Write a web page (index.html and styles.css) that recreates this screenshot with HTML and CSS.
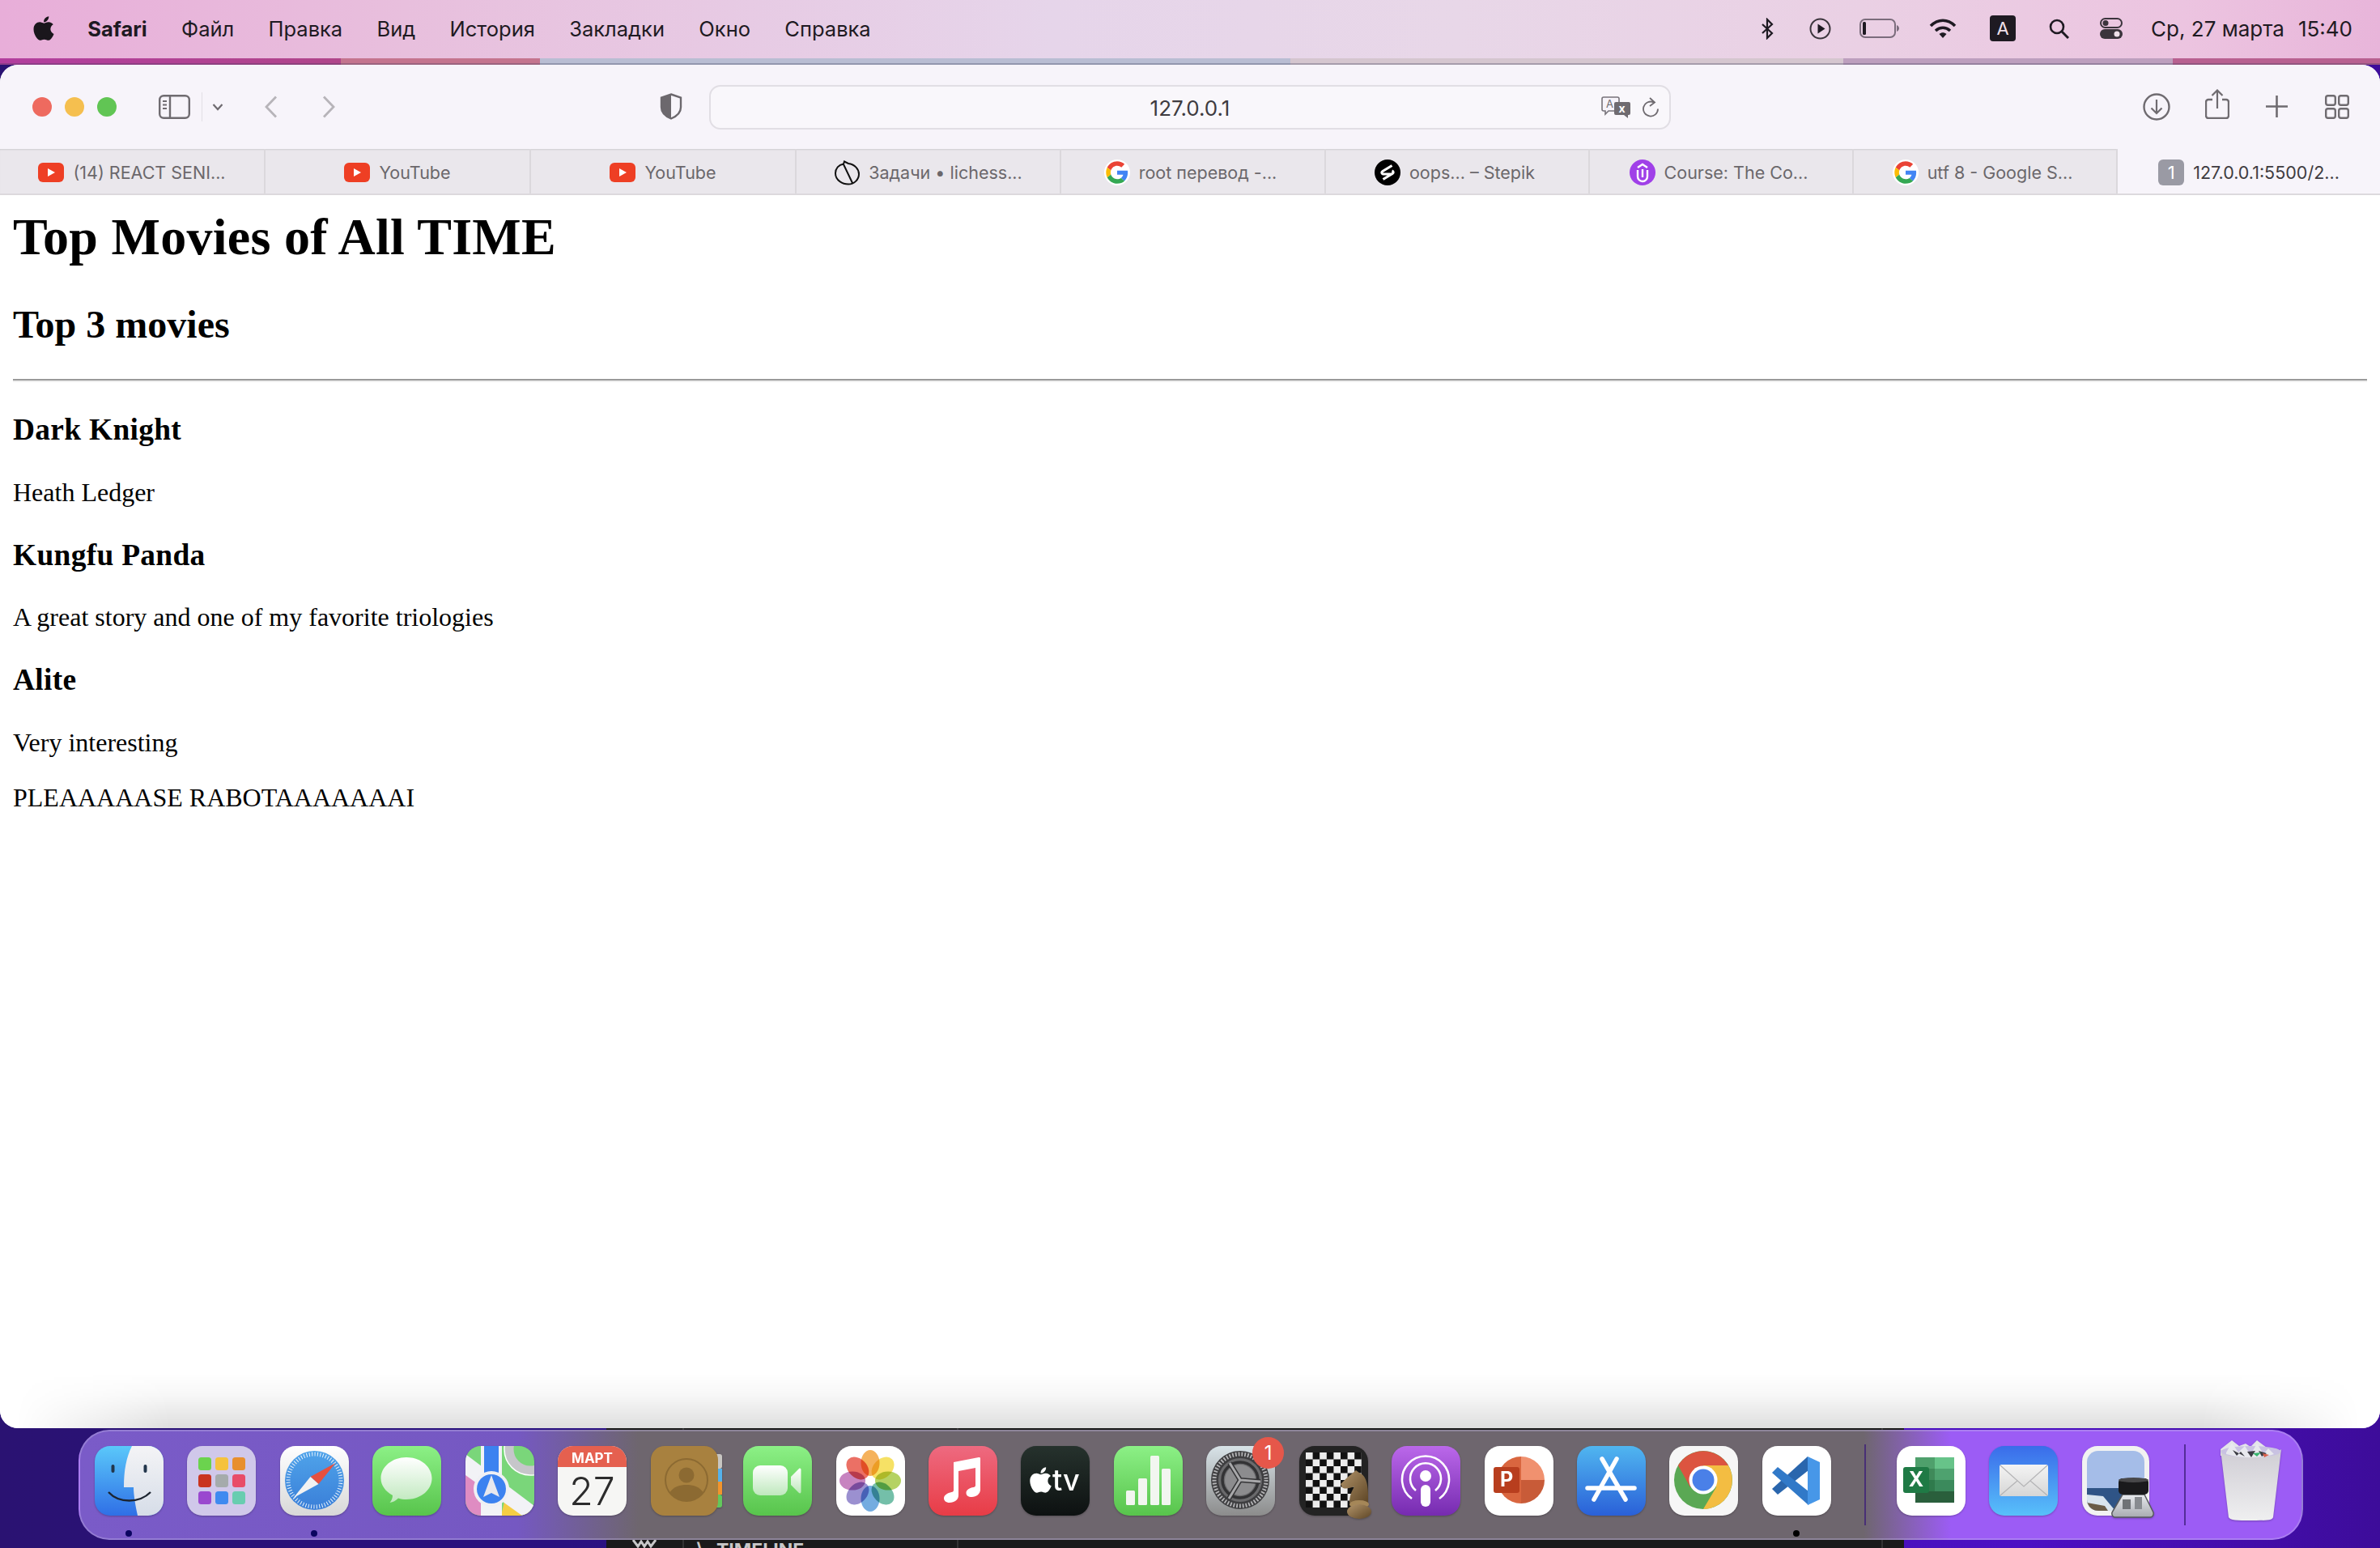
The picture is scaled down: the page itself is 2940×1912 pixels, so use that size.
FILE: index.html
```html
<!DOCTYPE html>
<html lang="en">
  <head>
    <meta charset="UTF-8" />
    <title>Top Movies of All TIME</title>
    <link rel="stylesheet" href="styles.css">
  </head>
  <body>
    <svg class="svg-defs" width="0" height="0">
      <defs>
        <linearGradient id="g-finder" x1="0" y1="0" x2="0" y2="1"><stop offset="0" stop-color="#5ac8fa"/><stop offset="1" stop-color="#2f6fe6"/></linearGradient>
        <linearGradient id="g-finder2" x1="0" y1="0" x2="0" y2="1"><stop offset="0" stop-color="#f4f4f6"/><stop offset="1" stop-color="#d6dde8"/></linearGradient>
        <linearGradient id="g-safari" x1="0" y1="0" x2="0" y2="1"><stop offset="0" stop-color="#ffffff"/><stop offset="1" stop-color="#d8d8d8"/></linearGradient>
        <linearGradient id="g-compass" x1="0" y1="0" x2="0" y2="1"><stop offset="0" stop-color="#4fa3ea"/><stop offset="1" stop-color="#3a7fd8"/></linearGradient>
        <linearGradient id="g-green" x1="0" y1="0" x2="0" y2="1"><stop offset="0" stop-color="#8cf086"/><stop offset="1" stop-color="#58c44c"/></linearGradient>
        <linearGradient id="g-bubble" x1="0" y1="0" x2="0" y2="1"><stop offset="0" stop-color="#ffffff"/><stop offset="1" stop-color="#bfe8bd"/></linearGradient>
        <linearGradient id="g-music" x1="0" y1="0" x2="0" y2="1"><stop offset="0" stop-color="#ee6a80"/><stop offset="1" stop-color="#e83c46"/></linearGradient>
        <linearGradient id="g-tv" x1="0" y1="0" x2="0" y2="1"><stop offset="0" stop-color="#26322d"/><stop offset="1" stop-color="#0d1111"/></linearGradient>
        <linearGradient id="g-settings" x1="0" y1="0" x2="0" y2="1"><stop offset="0" stop-color="#d8e3e8"/><stop offset="1" stop-color="#8c8c8c"/></linearGradient>
        <linearGradient id="g-podcast" x1="0" y1="0" x2="0" y2="1"><stop offset="0" stop-color="#bb68ea"/><stop offset="1" stop-color="#762bb0"/></linearGradient>
        <linearGradient id="g-appstore" x1="0" y1="0" x2="0" y2="1"><stop offset="0" stop-color="#50b6f0"/><stop offset="1" stop-color="#2a60d8"/></linearGradient>
        <linearGradient id="g-mail" x1="0" y1="0" x2="0" y2="1"><stop offset="0" stop-color="#3a6cea"/><stop offset="1" stop-color="#58c0fa"/></linearGradient>
        <linearGradient id="g-envelope" x1="0" y1="0" x2="0" y2="1"><stop offset="0" stop-color="#f4f4f4"/><stop offset="1" stop-color="#d6d6d6"/></linearGradient>
        <linearGradient id="g-knight" x1="0" y1="0" x2="1" y2="1"><stop offset="0" stop-color="#b2946a"/><stop offset="1" stop-color="#5e4626"/></linearGradient>
        <linearGradient id="g-trash" x1="0" y1="0" x2="0" y2="1"><stop offset="0" stop-color="#cfcdd4"/><stop offset="1" stop-color="#efeff0"/></linearGradient>
        <linearGradient id="g-glass" x1="0" y1="0" x2="0" y2="1"><stop offset="0" stop-color="#e8eaee"/><stop offset="1" stop-color="#a8abb0"/></linearGradient>
        <pattern id="p-board" width="17.2" height="17" patternUnits="userSpaceOnUse" x="8" y="8">
          <rect width="17.2" height="17" fill="#111"/>
          <rect width="8.6" height="8.5" fill="#ececec"/>
          <rect x="8.6" y="8.5" width="8.6" height="8.5" fill="#ececec"/>
        </pattern>
        <symbol id="s-apple" viewBox="0 0 384 512">
          <path d="M318.7 268.7c-.2-36.7 16.4-64.4 50-84.8-18.8-26.9-47.2-41.7-84.7-44.6-35.5-2.8-74.3 20.7-88.5 20.7-15 0-49.4-19.7-76.4-19.7C63.3 141.2 4 184.8 4 273.5q0 39.3 14.4 81.2c12.8 36.7 59 126.7 107.2 125.2 25.2-.6 43-17.9 75.8-17.9 31.8 0 48.3 17.9 76.4 17.9 48.6-.7 90.4-82.5 102.6-119.3-65.2-30.7-61.7-90-61.7-91.9zm-56.6-164.2c27.3-32.4 24.8-61.9 24-72.5-24.1 1.4-52 16.4-67.9 34.9-17.5 19.8-27.8 44.3-25.6 71.9 26.1 2 49.9-11.4 69.5-34.3z"/>
        </symbol>
        <symbol id="s-youtube" viewBox="0 0 32 24">
          <rect width="32" height="24" rx="6" fill="#ee3f24"/>
          <path d="M12 7l9 5-9 5z" fill="#fff"/>
        </symbol>
        <symbol id="s-google" viewBox="-4 -4 56 56">
          <circle cx="24" cy="24" r="28" fill="#fff"/>
          <path fill="#EA4335" d="M24 9.5c3.54 0 6.71 1.22 9.21 3.6l6.85-6.85C35.9 2.38 30.47 0 24 0 14.62 0 6.51 5.38 2.56 13.22l7.98 6.19C12.43 13.72 17.74 9.5 24 9.5z"/>
          <path fill="#4285F4" d="M46.98 24.55c0-1.57-.15-3.09-.38-4.55H24v9.02h12.94c-.58 2.96-2.26 5.48-4.78 7.18l7.73 6c4.51-4.18 7.09-10.36 7.09-17.65z"/>
          <path fill="#FBBC05" d="M10.53 28.59c-.48-1.45-.76-2.99-.76-4.59s.27-3.14.76-4.59l-7.98-6.19C.92 16.46 0 20.12 0 24c0 3.88.92 7.54 2.56 10.78l7.97-6.19z"/>
          <path fill="#34A853" d="M24 48c6.48 0 11.93-2.13 16.02-5.81l-7.73-6c-2.15 1.45-4.92 2.3-8.29 2.3-6.26 0-11.57-4.22-13.47-9.91l-7.98 6.19C6.51 42.62 14.62 48 24 48z"/>
        </symbol>
      </defs>
    </svg>

    <div class="behind-window">
      <svg class="behind-mark" viewBox="0 0 30 10"><path d="M1 0l6 8 4-6 4 6 4-6 4 6 6-8" fill="none" stroke="#c8c8c8" stroke-width="3"/></svg>
      <span class="behind-line behind-line-a"></span>
      <span class="behind-chevron">&#8726;</span>
      <span class="behind-label">TIMELINE</span>
      <span class="behind-line behind-line-b"></span>
      <span class="behind-line behind-line-c"></span>
    </div>

    <!-- Menu bar -->
    <header class="menubar">
      <nav class="menu-left">
        <svg class="apple-logo"><use href="#s-apple"/></svg>
        <span class="menu-app">Safari</span>
        <span>Файл</span>
        <span>Правка</span>
        <span>Вид</span>
        <span>История</span>
        <span>Закладки</span>
        <span>Окно</span>
        <span>Справка</span>
      </nav>
      <div class="menu-right">
        <svg class="st-bt" viewBox="0 0 16 27"><path d="M2 8l12 11-6 6V2l6 6L2 19" fill="none" stroke="#1e1a22" stroke-width="2.2"/></svg>
        <svg class="st-play" viewBox="0 0 27 27"><circle cx="13.5" cy="13.5" r="12" fill="none" stroke="#3b343c" stroke-width="2"/><path d="M10.5 7.5l9 6-9 6z" fill="#1e1a22"/></svg>
        <svg class="st-battery" viewBox="0 0 49 24"><rect x="1" y="1" width="43" height="22" rx="6" fill="none" stroke="#7b6c7c" stroke-width="2"/><rect x="4" y="4" width="4" height="16" rx="1.5" fill="#1e1a22"/><path d="M46 8c2 1 3 2.500 3 4s-1 3-3 4z" fill="#7b6c7c"/></svg>
        <svg class="st-wifi" viewBox="0 0 34 24"><g fill="none" stroke="#1e1a22" stroke-width="3.6"><path d="M2 9c9-9 21-9 30 0"/><path d="M8 15c5.500-5 12.500-5 18 0"/></g><path d="M12.500 19c3-2.500 6-2.500 9 0L17 24z" fill="#1e1a22"/></svg>
        <div class="st-input">A</div>
        <svg class="st-search" viewBox="0 0 25 25"><circle cx="10" cy="10" r="8" fill="none" stroke="#1e1a22" stroke-width="2.6"/><path d="M16 16l8 8" stroke="#1e1a22" stroke-width="3"/></svg>
        <svg class="st-control" viewBox="0 0 28 26"><rect x="1" y="1" width="26" height="11" rx="5.500" fill="none" stroke="#3b343c" stroke-width="2"/><circle cx="7" cy="6.500" r="3.500" fill="#3b343c"/><rect y="14" width="28" height="12" rx="6" fill="#3b343c"/><circle cx="21" cy="20" r="3.500" fill="#efe0ea"/></svg>
        <span class="menu-date">Ср, 27 марта</span>
        <span class="menu-time">15:40</span>
      </div>
    </header>

    <div class="wallpaper-strip"></div>

    <!-- Safari window -->
    <main class="window">
      <div class="toolbar">
        <div class="toolbar-left">
          <div class="lights">
            <span class="light light-red"></span>
            <span class="light light-yellow"></span>
            <span class="light light-green"></span>
          </div>
          <svg class="tb-sidebar" viewBox="0 0 39 30"><rect x="1.200" y="1.200" width="36.600" height="27.600" rx="5" fill="none" stroke="#6f6b70" stroke-width="2.400"/><path d="M14 1v28" stroke="#6f6b70" stroke-width="2.400"/><path d="M5 8h5M5 12.500h5M5 17h5" stroke="#6f6b70" stroke-width="2"/></svg>
          <span class="tb-divider"></span>
          <svg class="tb-chevron" viewBox="0 0 14 10"><path d="M1.500 2l5.500 6 5.500-6" fill="none" stroke="#6f6b70" stroke-width="2.200"/></svg>
          <svg class="tb-back" viewBox="0 0 17 28"><path d="M15 1.500L3 14l12 12.500" fill="none" stroke="#b7b4b9" stroke-width="2.800"/></svg>
          <svg class="tb-forward" viewBox="0 0 17 28"><path d="M2 1.500L14 14 2 26.500" fill="none" stroke="#b7b4b9" stroke-width="2.800"/></svg>
        </div>
        <svg class="tb-shield" viewBox="0 0 28 33"><path d="M14 1.500l12 4v12c0 7-6 11.500-12 14-6-2.500-12-7-12-14v-12z" fill="none" stroke="#6c686d" stroke-width="2.400"/><path d="M14 1.500l-12 4v12c0 7 6 11.500 12 14z" fill="#6c686d"/></svg>
        <div class="urlbar">
          <span class="url-text">127.0.0.1</span>
          <svg class="url-translate" viewBox="0 0 36 27"><path d="M3 1h17a2 2 0 0 1 2 2v13a2 2 0 0 1-2 2H9l-4 4v-4H3a2 2 0 0 1-2-2V3a2 2 0 0 1 2-2z" fill="#f7f4fa" stroke="#77737a" stroke-width="1.600"/><text x="6" y="14" class="translate-a">A</text><path d="M18 7h16a2 2 0 0 1 2 2v12a2 2 0 0 1-2 2h-1v4l-5-4H18a2 2 0 0 1-2-2V9a2 2 0 0 1 2-2z" fill="#6f6b70"/><text x="21.500" y="20" class="translate-x">x</text></svg>
          <svg class="url-reload" viewBox="0 0 21 25"><path d="M14 6.500a9 9 0 1 0 5 8" fill="none" stroke="#6f6b70" stroke-width="1.800"/><path d="M9 1l6 5.500L9 11" fill="none" stroke="#6f6b70" stroke-width="1.800"/></svg>
        </div>
        <div class="toolbar-right">
          <svg class="tb-download" viewBox="0 0 34 34"><circle cx="17" cy="17" r="15.500" fill="none" stroke="#6f6b70" stroke-width="2.400"/><path d="M17 8v17M10.500 18.500l6.500 6.500 6.500-6.500" fill="none" stroke="#6f6b70" stroke-width="2.200"/></svg>
          <svg class="tb-share" viewBox="0 0 30 37"><path d="M9 13H4a3 3 0 0 0-3 3v17a3 3 0 0 0 3 3h22a3 3 0 0 0 3-3V16a3 3 0 0 0-3-3h-5" fill="none" stroke="#6f6b70" stroke-width="2.400"/><path d="M15 24V2M8.500 8L15 1.500 21.500 8" fill="none" stroke="#6f6b70" stroke-width="2.200"/></svg>
          <svg class="tb-plus" viewBox="0 0 27 27"><path d="M13.500 0v27M0 13.500h27" stroke="#6f6b70" stroke-width="2.600"/></svg>
          <svg class="tb-tabs" viewBox="0 0 30 30"><g fill="none" stroke="#6f6b70" stroke-width="2.400"><rect x="1.200" y="1.200" width="11.600" height="11.600" rx="2.500"/><rect x="17.200" y="1.200" width="11.600" height="11.600" rx="2.500"/><rect x="1.200" y="17.200" width="11.600" height="11.600" rx="2.500"/><rect x="17.200" y="17.200" width="11.600" height="11.600" rx="2.500"/></g></svg>
        </div>
      </div>

      <div class="tabs">
        <div class="tab"><svg class="tab-icon tab-yt"><use href="#s-youtube"/></svg><span>(14) REACT SENI...</span></div>
        <div class="tab"><svg class="tab-icon tab-yt"><use href="#s-youtube"/></svg><span>YouTube</span></div>
        <div class="tab"><svg class="tab-icon tab-yt"><use href="#s-youtube"/></svg><span>YouTube</span></div>
        <div class="tab"><svg class="tab-icon" viewBox="0 0 32 32"><path d="M13 2.500l5 2.500C26 6 31 12 31 18c0 7-6 12.500-13 12.500S2 26 2 17C2 11 6 6.500 12 5.500zM12 6l11 23" fill="none" stroke="#111" stroke-width="2"/></svg><span>Задачи • lichess...</span></div>
        <div class="tab tab-shifted"><svg class="tab-icon"><use href="#s-google"/></svg><span>root перевод -...</span></div>
        <div class="tab tab-shifted"><svg class="tab-icon" viewBox="0 0 32 32"><circle cx="16" cy="16" r="16" fill="#000"/><path d="M21.500 7.500L10 14.500c-2 1.500-1 3 .5 3.500l10 0M10.500 24.500L22 17.500c2-1.500 1-3-.5-3.500" fill="none" stroke="#fff" stroke-width="3.200"/></svg><span>oops... – Stepik</span></div>
        <div class="tab tab-shifted"><svg class="tab-icon" viewBox="0 0 32 32"><circle cx="16" cy="16" r="16" fill="#a040e8"/><path d="M10 13v8a6 6 0 0 0 12 0v-8M10 10l6-4 6 4" fill="none" stroke="#fff" stroke-width="2.400"/><path d="M16 12v10" stroke="#fff" stroke-width="2.400"/></svg><span>Course: The Co...</span></div>
        <div class="tab tab-shifted"><svg class="tab-icon"><use href="#s-google"/></svg><span>utf 8 - Google S...</span></div>
        <div class="tab tab-active"><span class="tab-badge">1</span><span>127.0.0.1:5500/2...</span></div>
      </div>

      <div class="content">
        <h1>Top Movies of All TIME</h1>
        <h2>Top 3 movies</h2>
        <hr />
        <h3>Dark Knight</h3>
        <p>Heath Ledger</p>
        <h3>Kungfu Panda</h3>
        <p>A great story and one of my favorite triologies</p>
        <h3>Alite</h3>
        <p>Very interesting</p>
        <p>PLEAAAAASE RABOTAAAAAAAI</p>
      </div>
      <div class="content-fade"></div>
    </main>

    <!-- Dock -->
    <footer class="dock">
      <div class="dock-item running">
        <svg class="dock-icon" viewBox="0 0 85 86"><rect width="85" height="86" rx="19" fill="url(#g-finder)"/><path d="M46 0h20a19 19 0 0 1 19 19v48a19 19 0 0 1-19 19H53C50 72 48 60 48 51H36C36 30 39 14 46 0z" fill="url(#g-finder2)"/><rect x="20.500" y="23" width="4" height="10" rx="2" fill="#22364c"/><rect x="60.500" y="23" width="4" height="10" rx="2" fill="#22364c"/><path d="M17 57c13 14 38 14 52 0" fill="none" stroke="#1c2430" stroke-width="2.400"/></svg>
      </div>
      <div class="dock-item">
        <svg class="dock-icon" viewBox="0 0 85 86"><rect width="85" height="86" rx="19" fill="#d0c8ea"/><rect x="14" y="14" width="16" height="16" rx="3.500" fill="#6bd34e"/><rect x="35" y="14" width="16" height="16" rx="3.500" fill="#f5c23e"/><rect x="56" y="14" width="16" height="16" rx="3.500" fill="#e88f2e"/><rect x="14" y="35" width="16" height="16" rx="3.500" fill="#c9331f"/><rect x="35" y="35" width="16" height="16" rx="3.500" fill="#a5abac"/><rect x="56" y="35" width="16" height="16" rx="3.500" fill="#e84c68"/><rect x="14" y="56" width="16" height="16" rx="3.500" fill="#9a48cf"/><rect x="35" y="56" width="16" height="16" rx="3.500" fill="#3f8af0"/><rect x="56" y="56" width="16" height="16" rx="3.500" fill="#68cdb0"/></svg>
      </div>
      <div class="dock-item running">
        <svg class="dock-icon" viewBox="0 0 85 86"><rect width="85" height="86" rx="19" fill="url(#g-safari)"/><circle cx="42.500" cy="42.500" r="36.500" fill="url(#g-compass)"/><circle cx="42.500" cy="42.500" r="32.500" fill="none" stroke="#e8f2fb" stroke-width="5" stroke-dasharray="1 2.400"/><path d="M68.500 21L37.500 38l10 9z" fill="#e6503f"/><path d="M16.500 64l21-26 10 9z" fill="#f2f2f2"/></svg>
      </div>
      <div class="dock-item">
        <svg class="dock-icon" viewBox="0 0 85 86"><rect width="85" height="86" rx="19" fill="url(#g-green)"/><path d="M42 14c17.500 0 31.500 11.500 31.500 26S59.500 66 42 66c-3.500 0-7-.5-10-1.500-3 3-6.500 5-10.500 5.500 2-2.500 3.500-5.500 3.500-9C16 56 10.500 48.500 10.500 40 10.500 25.500 24.500 14 42 14z" fill="url(#g-bubble)"/></svg>
      </div>
      <div class="dock-item">
        <svg class="dock-icon" viewBox="0 0 85 86"><defs><clipPath id="c-maps"><rect width="85" height="86" rx="19"/></clipPath></defs><g clip-path="url(#c-maps)"><rect width="85" height="86" fill="#7ad67a"/><path d="M0 35l30 20-5 31H0z" fill="#df8cc2"/><path d="M50 60l35 26H44z" fill="#f5cd45"/><path d="M0 10l85 64v12H70L0 36z" fill="#f2f2f6"/><rect x="19" y="0" width="26" height="86" fill="#f2f2f6"/><rect x="23" y="0" width="18" height="36" fill="#3c82f0"/><circle cx="80" cy="4" r="26" fill="none" stroke="#c6c6ca" stroke-width="11"/><circle cx="80" cy="4" r="32" fill="none" stroke="#fff" stroke-width="1.500"/></g><circle cx="32" cy="53" r="22" fill="#f0f0f4"/><circle cx="32" cy="53" r="18" fill="#3c82f0"/><path d="M32 36l10 27-10-5-10 5z" fill="#e8e8ee"/></svg>
      </div>
      <div class="dock-item">
        <svg class="dock-icon" viewBox="0 0 85 86"><defs><clipPath id="c-cal"><rect width="85" height="86" rx="19"/></clipPath></defs><g clip-path="url(#c-cal)"><rect width="85" height="86" fill="#f6f6f4"/><rect width="85" height="26" fill="#e5604f"/></g><text x="42.500" y="21" class="cal-month">МАРТ</text><text x="42.500" y="73" class="cal-day">27</text></svg>
      </div>
      <div class="dock-item">
        <svg class="dock-icon" viewBox="0 0 85 86"><rect x="78" y="10" width="10" height="18" rx="3" fill="#c8c6c2"/><rect x="78" y="28" width="10" height="16" fill="#54b2ec"/><rect x="78" y="44" width="10" height="16" fill="#f2942c"/><rect x="78" y="60" width="10" height="16" rx="3" fill="#62c85c"/><rect width="83" height="86" rx="17" fill="#a8813f"/><g fill="none" stroke="#8c6a32" stroke-width="2"><circle cx="44" cy="42" r="26"/></g><circle cx="44" cy="36" r="9.500" fill="#8c6a32"/><path d="M23 58c5-8 13-10 21-10s16 2 21 10c-5 6-13 10-21 10s-16-4-21-10z" fill="#8c6a32"/></svg>
      </div>
      <div class="dock-item">
        <svg class="dock-icon" viewBox="0 0 85 86"><rect width="85" height="86" rx="19" fill="url(#g-green)"/><rect x="12" y="24" width="43" height="37" rx="9" fill="url(#g-bubble)"/><path d="M59 38l10-10c1.500-1 2.500 0 2.500 1.500v27c0 1.500-1 2.500-2.500 1.500L59 48z" fill="url(#g-bubble)"/></svg>
      </div>
      <div class="dock-item">
        <svg class="dock-icon" viewBox="0 0 85 86"><rect width="85" height="86" rx="19" fill="#fff"/><g class="petals" transform="translate(42 43)"><ellipse cy="-22" rx="11.500" ry="16" fill="#f3a53f"/><ellipse cy="-22" rx="11.500" ry="16" fill="#f5dc4a" transform="rotate(45)"/><ellipse cy="-22" rx="11.500" ry="16" fill="#a8ca48" transform="rotate(90)"/><ellipse cy="-22" rx="11.500" ry="16" fill="#5cb49a" transform="rotate(135)"/><ellipse cy="-22" rx="11.500" ry="16" fill="#5c9ddb" transform="rotate(180)"/><ellipse cy="-22" rx="11.500" ry="16" fill="#8a7cc8" transform="rotate(225)"/><ellipse cy="-22" rx="11.500" ry="16" fill="#bd6fb5" transform="rotate(270)"/><ellipse cy="-22" rx="11.500" ry="16" fill="#e8574a" transform="rotate(315)"/></g></svg>
      </div>
      <div class="dock-item">
        <svg class="dock-icon" viewBox="0 0 85 86"><rect width="85" height="86" rx="19" fill="url(#g-music)"/><path d="M31 20l31-6c1.500-.3 2 .5 2 1.500V54c0 5-5 9-10.500 9-4.500 0-7-2-7-5 0-4 4.500-6.500 9-7 1.500-.2 2.500-1 2.500-2.500V27l-21 4v30c0 5.500-5 9-11 9-4.500 0-7-2.500-7-5.500 0-4 4.500-6.500 9.500-7.500 1.500-.3 2.500-1 2.500-2.500z" fill="#fff"/></svg>
      </div>
      <div class="dock-item">
        <svg class="dock-icon" viewBox="0 0 85 86"><rect width="85" height="86" rx="19" fill="url(#g-tv)"/><use href="#s-apple" x="11" y="24" width="27" height="36" fill="#fff"/><text x="39" y="55" class="tv-text">tv</text></svg>
      </div>
      <div class="dock-item">
        <svg class="dock-icon" viewBox="0 0 85 86"><rect width="85" height="86" rx="19" fill="url(#g-green)"/><g fill="#f2f6f0"><rect x="15" y="55" width="11" height="18" rx="1.500"/><rect x="30" y="40" width="11" height="33" rx="1.500"/><rect x="45" y="12" width="11" height="61" rx="1.500"/><rect x="59" y="28" width="11" height="45" rx="1.500"/></g></svg>
      </div>
      <div class="dock-item">
        <svg class="dock-icon" viewBox="0 0 85 86"><rect width="85" height="86" rx="19" fill="url(#g-settings)"/><circle cx="42" cy="42" r="36" fill="#3e3e40"/><circle cx="42" cy="42" r="32" fill="none" stroke="#b4b4b6" stroke-width="5" stroke-dasharray="1.800 2"/><circle cx="42" cy="42" r="27" fill="#6a6a6c"/><circle cx="42" cy="42" r="22" fill="none" stroke="#333335" stroke-width="3.500"/><circle cx="42" cy="42" r="19" fill="#8c8c8e"/><path d="M42 42L29 21M42 42l25 2M42 42L28 65" stroke="#333335" stroke-width="6"/><path d="M42 42L29 21M42 42l25 2M42 42L28 65" stroke="#a8a8aa" stroke-width="3"/></svg>
        <span class="dock-badge">1</span>
      </div>
      <div class="dock-item">
        <svg class="dock-icon" viewBox="0 0 85 86"><rect width="85" height="86" rx="19" fill="#232323"/><rect x="8" y="8" width="69" height="68" fill="url(#p-board)"/><path d="M70 30l4 3c8 3 12 13 11 37H62c0-10 4-16 6-20-6 2-12 4-15 1l-2-4c5-5 9-9 13-12z" fill="url(#g-knight)"/><ellipse cx="74" cy="72" rx="12" ry="5" fill="#a58758"/><ellipse cx="74" cy="81" rx="15" ry="9" fill="url(#g-knight)"/></svg>
      </div>
      <div class="dock-item">
        <svg class="dock-icon" viewBox="0 0 85 86"><rect width="85" height="86" rx="19" fill="url(#g-podcast)"/><g fill="none" stroke="#fff" stroke-width="2.600"><path d="M25 65a29 29 0 1 1 34 0"/><path d="M30 55a19 19 0 1 1 24 0"/></g><circle cx="42" cy="37" r="7" fill="#fff"/><rect x="36" y="48" width="12" height="27" rx="6" fill="#fff"/></svg>
      </div>
      <div class="dock-item">
        <svg class="dock-icon" viewBox="0 0 85 86"><rect width="85" height="86" rx="19" fill="#fff"/><path d="M45 42V13a29 29 0 0 1 29 29z" fill="#f0916f"/><path d="M45 42h29a29 29 0 0 1-29 29z" fill="#c85b38"/><path d="M45 13v58a29 29 0 0 1 0-58z" fill="#d9663f"/><rect x="11" y="26" width="32" height="32" rx="3" fill="#b83e1e"/><text x="27" y="50" class="ppt-letter">P</text></svg>
      </div>
      <div class="dock-item">
        <svg class="dock-icon" viewBox="0 0 85 86"><rect width="85" height="86" rx="19" fill="url(#g-appstore)"/><g stroke="#fff" stroke-width="5.500" stroke-linecap="round" fill="none"><path d="M49 16L21 66"/><path d="M31 16L60 66"/><path d="M13 52h58"/></g></svg>
      </div>
      <div class="dock-item">
        <svg class="dock-icon" viewBox="0 0 85 86"><rect width="85" height="86" rx="19" fill="#f6f6f6"/><circle cx="42" cy="42" r="36" fill="#5aa854"/><path d="M11 24a36 36 0 0 1 62 0H42L26 51z" fill="#dc5440"/><path d="M73 24a36 36 0 0 1-31 54l16-27-16-27z" fill="#f3bd42"/><circle cx="42" cy="42" r="17.500" fill="#fff"/><circle cx="42" cy="42" r="13.500" fill="#4a80e8"/></svg>
      </div>
      <div class="dock-item running running-dark">
        <svg class="dock-icon" viewBox="0 0 85 86"><rect width="85" height="86" rx="19" fill="#fff"/><path d="M56 13L12 53l7 7 38-30z" fill="#2a66ad"/><path d="M12 33l7-7 38 30v17z" fill="#3179c8"/><path d="M56 13l15 7v46l-15 7z" fill="#4797e8"/></svg>
      </div>
      <span class="dock-sep"></span>
      <div class="dock-item">
        <svg class="dock-icon" viewBox="0 0 85 86"><rect width="85" height="86" rx="19" fill="#fff"/><rect x="23" y="14" width="24" height="14" fill="#4fa06c"/><rect x="47" y="14" width="24" height="14" fill="#67c389"/><rect x="23" y="28" width="24" height="14" fill="#3f8a5a"/><rect x="47" y="28" width="24" height="14" fill="#4ea26f"/><rect x="23" y="42" width="24" height="14" fill="#2f7a4c"/><rect x="47" y="42" width="24" height="14" fill="#3b8a5c"/><rect x="23" y="56" width="48" height="14" fill="#2a5f3c"/><rect x="8" y="26" width="32" height="32" rx="3" fill="#1f7a45"/><text x="24" y="50" class="xls-letter">X</text></svg>
      </div>
      <div class="dock-item">
        <svg class="dock-icon" viewBox="0 0 85 86"><rect width="85" height="86" rx="19" fill="url(#g-mail)"/><rect x="13" y="23" width="60" height="39" rx="2.500" fill="url(#g-envelope)"/><path d="M14 24l29 26 29-26M14 61l21-18M72 61L51 43" fill="none" stroke="#b4b4b6" stroke-width="1.200"/></svg>
      </div>
      <div class="dock-item">
        <svg class="dock-icon" viewBox="0 0 85 86"><defs><clipPath id="c-prev"><rect x="6" y="6" width="71" height="74" rx="14"/></clipPath></defs><rect width="83" height="86" rx="19" fill="#f2f2f2"/><g clip-path="url(#c-prev)"><rect x="6" y="6" width="71" height="46" fill="#a5bde8"/><rect x="6" y="52" width="71" height="28" fill="#2f5486"/><path d="M6 60l20 2 15 18H6z" fill="#d8e4ee"/><path d="M6 70l22 4 4 6H6z" fill="#6a5c48"/></g><path d="M50 60h27l11 22c1 3-1 6-4 6H41c-3 0-5-3-4-6z" fill="url(#g-glass)" stroke="#56585c" stroke-width="1.500"/><rect x="45" y="40" width="37" height="20" rx="5" fill="#1a1a1c"/><ellipse cx="63.500" cy="42" rx="18.500" ry="3" fill="#48484a"/><rect x="50" y="66" width="10" height="12" fill="#6f7276"/><rect x="65" y="63" width="9" height="15" fill="#888b90"/></svg>
      </div>
      <span class="dock-sep"></span>
      <div class="dock-item">
        <svg class="dock-icon" viewBox="0 0 85 86"><path d="M5 4l14-11 9 7 8-3 6 4 8-8 12 9 14 2v8H5z" fill="#e4e5e9"/><path d="M5 4c12 12 63 12 75 0l-10 84c-1 4-9 4-27 4s-26 0-28-4z" fill="url(#g-trash)"/><ellipse cx="42.500" cy="7" rx="37" ry="7" fill="#c9c2e2"/><path d="M12 8l7-12 8 12 8-8 7 11 8-14 8 13 6-7 7 7c-12 5-40 6-59 0z" fill="#e8e9ee"/><path d="M20 5l5 7 5-5 5 6zM38 7l5 7 5-8zM52 6l4 7 6-4z" fill="#3c3c44"/><path d="M45 9l5 4 5-5z" fill="#38b46e"/><path d="M57 9l2 5 6-3z" fill="#d8604c"/></svg>
      </div>
    </footer>
  </body>
</html>
```

FILE: styles.css
```css
* {
  box-sizing: border-box;
}

html,
body {
  width: 2940px;
  height: 1912px;
  margin: 0;
  overflow: hidden;
}

body {
  position: relative;
  display: flex;
  flex-direction: column;
  font-family: Inter, "Noto Sans", sans-serif;
  background: linear-gradient(to right, #2a1272 0, #2a1280 700px, #4c0fc4 2500px, #3d0c9a 2940px);
}

.svg-defs {
  position: absolute;
}

/* stuff peeking out under the dock */
.behind-window {
  position: absolute;
  left: 749px;
  width: 1603px;
  top: 1740px;
  bottom: 0;
  background: #1a1a1a;
  overflow: hidden;
  color: #c8c8c8;
  font-size: 23px;
  font-weight: 700;
  line-height: 28px;
}

.behind-mark {
  position: absolute;
  left: 32px;
  top: 162px;
  width: 30px;
  height: 10px;
}

.behind-line {
  position: absolute;
  top: 0;
  bottom: 0;
  width: 2px;
  background: #333;
}

.behind-line-a {
  left: 94px;
}

.behind-line-b {
  left: 433px;
}

.behind-line-c {
  left: 1575px;
}

.behind-chevron {
  position: absolute;
  left: 108px;
  top: 161px;
}

.behind-label {
  position: absolute;
  left: 136px;
  top: 161px;
}

/* menu bar */
.menubar {
  position: relative;
  display: flex;
  justify-content: space-between;
  align-items: center;
  height: 72px;
  padding: 0 34px 2px 40px;
  color: #1e1a22;
  font-size: 26px;
  background: linear-gradient(to right, #e8aed9 0, #e8bfdd 500px, #e6d5ea 1300px, #e8d7e8 1800px, #ead0e4 2300px, #ecc4e0 2700px, #e8b5da 2940px);
}

.menu-left {
  display: flex;
  align-items: center;
  gap: 42.300px;
  font-size: 25.500px;
}

.apple-logo {
  width: 28px;
  height: 34px;
  margin-right: -2px;
  fill: #1a161c;
}

.menu-app {
  font-weight: 700;
}

.menu-right {
  display: flex;
  align-items: center;
}

.st-bt {
  width: 16px;
  height: 27px;
  margin-right: 44px;
}

.st-play {
  width: 27px;
  height: 27px;
  margin-right: 35px;
}

.st-battery {
  width: 49px;
  height: 24px;
  margin-right: 37px;
}

.st-wifi {
  width: 34px;
  height: 24px;
  margin-right: 41px;
}

.st-input {
  width: 32px;
  height: 32px;
  margin-right: 41px;
  border-radius: 4px;
  background: #1e1a22;
  color: #efe0ea;
  font-size: 22px;
  line-height: 32px;
  text-align: center;
}

.st-search {
  width: 25px;
  height: 25px;
  margin-right: 38px;
}

.st-control {
  width: 28px;
  height: 26px;
  margin-right: 35px;
}

.menu-time {
  margin-left: 17px;
}

.wallpaper-strip {
  height: 8px;
  background: linear-gradient(to right, #b23e9e 0, #b0458a 421px, #c4748e 421px, #c4748e 667px, #b9bdd3 667px, #b9bdd3 1594px, #d5c6cf 1594px, #d5c6cf 2277px, #bd9fbe 2277px, #bd9fbe 2684px, #b86090 2684px);
  box-shadow: inset 0 -2px 0 rgba(60, 60, 90, 0.3);
}

/* browser window */
.window {
  position: relative;
  display: flex;
  flex-direction: column;
  height: 1684px;
  flex: none;
  border-radius: 22px;
  overflow: hidden;
  background: #fff;
}

.toolbar {
  display: grid;
  grid-template-columns: 815px 61px 1188px 1fr;
  align-items: center;
  height: 104px;
  padding-bottom: 1px;
  background: #f7f4fa;
}

.toolbar-left {
  display: flex;
  align-items: center;
  padding-left: 40px;
}

.lights {
  display: flex;
  gap: 16px;
  margin-right: 52px;
}

.light {
  width: 24px;
  height: 24px;
  border-radius: 50%;
}

.light-red {
  background: #ee6a5f;
}

.light-yellow {
  background: #f5bf4f;
}

.light-green {
  background: #61c554;
}

.tb-sidebar {
  width: 39px;
  height: 30px;
}

.tb-divider {
  width: 1px;
  height: 36px;
  margin: 0 12px 0 14px;
  background: #e2dfe5;
}

.tb-chevron {
  width: 14px;
  height: 10px;
}

.tb-back {
  width: 17px;
  height: 28px;
  margin-left: 50px;
}

.tb-forward {
  width: 17px;
  height: 28px;
  margin-left: 55px;
}

.tb-shield {
  width: 28px;
  height: 33px;
}

.urlbar {
  display: flex;
  align-items: center;
  justify-content: flex-end;
  position: relative;
  height: 55px;
  padding-right: 12px;
  margin-top: 2px;
  border: 2px solid #e1dee4;
  border-radius: 14px;
  background: #f9f7fb;
}

.url-text {
  position: absolute;
  left: 0;
  right: 0;
  padding-top: 1px;
  text-align: center;
  font-size: 26px;
  color: #3e3b40;
}

.url-translate {
  width: 36px;
  height: 27px;
  margin-right: 15px;
}

.translate-a {
  font-size: 13px;
  fill: #6f6b70;
}

.translate-x {
  font-size: 14px;
  font-weight: 700;
  fill: #fff;
}

.url-reload {
  width: 21px;
  height: 25px;
}

.toolbar-right {
  display: flex;
  align-items: center;
  padding-left: 583px;
}

.tb-download {
  width: 34px;
  height: 34px;
}

.tb-share {
  width: 30px;
  height: 37px;
  margin: -6px 0 0 43px;
}

.tb-plus {
  width: 27px;
  height: 27px;
  margin-left: 45px;
}

.tb-tabs {
  width: 30px;
  height: 30px;
  margin-left: 46px;
}

/* tab strip */
.tabs {
  display: grid;
  grid-template-columns: 328px 328px 328px 327px 327px 326px 326px 326px 1fr;
  height: 57px;
  flex: none;
  background: #eae7ec;
  border-bottom: 2px solid #dcd9dd;
  box-shadow: inset 0 2px 2px -1px rgba(0, 0, 0, 0.12);
}

.tab {
  display: flex;
  align-items: center;
  justify-content: center;
  gap: 11px;
  padding-top: 2px;
  font-size: 21.500px;
  color: #6b676b;
  border-right: 2px solid #dbd8dc;
  white-space: nowrap;
}

.tab-shifted {
  padding-right: 6px;
}

.tab-active {
  background: #f7f4fa;
  border-right: 0;
  color: #3e3b40;
}

.tab-icon {
  width: 32px;
  height: 32px;
  flex: none;
}

.tab-yt {
  height: 24px;
}

.tab-badge {
  width: 32px;
  height: 32px;
  border-radius: 6px;
  background: #9a9aa4;
  color: #fff;
  font-size: 22px;
  line-height: 32px;
  text-align: center;
}

/* page inside the browser */
.content {
  flex: 1;
  padding: 15px 16px 16px;
  background: #fff;
  color: #000;
  font-family: "Liberation Serif", serif;
  font-size: 32px;
}

.content h1 {
  font-size: 64px;
  letter-spacing: 0.27px;
  margin: 0 0 43px;
}

.content h2 {
  font-size: 48px;
  margin: 40px 0;
}

.content h3 {
  font-size: 37.440px;
  letter-spacing: 0.3px;
  margin: 37.440px 0;
}

.content p {
  line-height: 36.500px;
  margin: 32px 0;
}

.content hr {
  margin: 18px 0;
  border: 0;
  border-top: 2px solid #9a9a9a;
  border-bottom: 2px solid #eee;
}

.content-fade {
  position: absolute;
  left: 0;
  right: 0;
  bottom: 0;
  height: 68px;
  background: linear-gradient(to bottom, rgba(0, 0, 0, 0), rgba(0, 0, 0, 0.03) 40%, rgba(0, 0, 0, 0.13));
  -webkit-mask-image: linear-gradient(to right, transparent 20px, #000 210px, #000 2720px, transparent 2915px);
  mask-image: linear-gradient(to right, transparent 20px, #000 210px, #000 2720px, transparent 2915px);
}

/* dock */
.dock {
  position: relative;
  display: flex;
  align-items: flex-start;
  gap: 29.450px;
  width: 2748px;
  height: 136px;
  margin: 2px 0 0 97px;
  padding: 20px 0 0 20px;
  border-radius: 38px;
  border: 2px solid rgba(200, 190, 235, 0.35);
  background: linear-gradient(to right, #7a5bc8 0, #7558c2 540px, #6e666e 690px, #6e666e 2203px, #9c5cf5 2311px);
}

.dock-item {
  position: relative;
  width: 85px;
  height: 86px;
  flex: none;
  margin-top: -2px;
  margin-left: -2px;
  margin-right: 2px;
}

.dock-icon {
  display: block;
  width: 85px;
  height: 86px;
  overflow: visible;
  filter: drop-shadow(0 1px 1px rgba(0, 0, 0, 0.25));
}

.petals ellipse {
  mix-blend-mode: multiply;
  fill-opacity: 0.85;
}

.running::after {
  content: "";
  position: absolute;
  left: 38px;
  top: 104px;
  width: 8px;
  height: 8px;
  border-radius: 50%;
  background: #0b0560;
}

.running-dark::after {
  background: #000;
}

.dock-sep {
  width: 2px;
  height: 100px;
  flex: none;
  margin: -4px 10px 0;
  background: rgba(60, 30, 120, 0.75);
}

.dock-badge {
  position: absolute;
  left: 57px;
  top: -11px;
  width: 39px;
  height: 39px;
  border-radius: 50%;
  background: #e6574a;
  color: #fff;
  font-size: 24px;
  line-height: 39px;
  text-align: center;
}

.cal-month {
  font-size: 17px;
  font-weight: 700;
  fill: #fff;
  text-anchor: middle;
}

.cal-day {
  font-size: 48px;
  font-weight: 300;
  fill: #2c2c2c;
  text-anchor: middle;
}

.tv-text {
  font-size: 36px;
  font-weight: 500;
  fill: #fff;
}

.ppt-letter,
.xls-letter {
  font-size: 25px;
  font-weight: 700;
  fill: #fff;
  text-anchor: middle;
}
```
